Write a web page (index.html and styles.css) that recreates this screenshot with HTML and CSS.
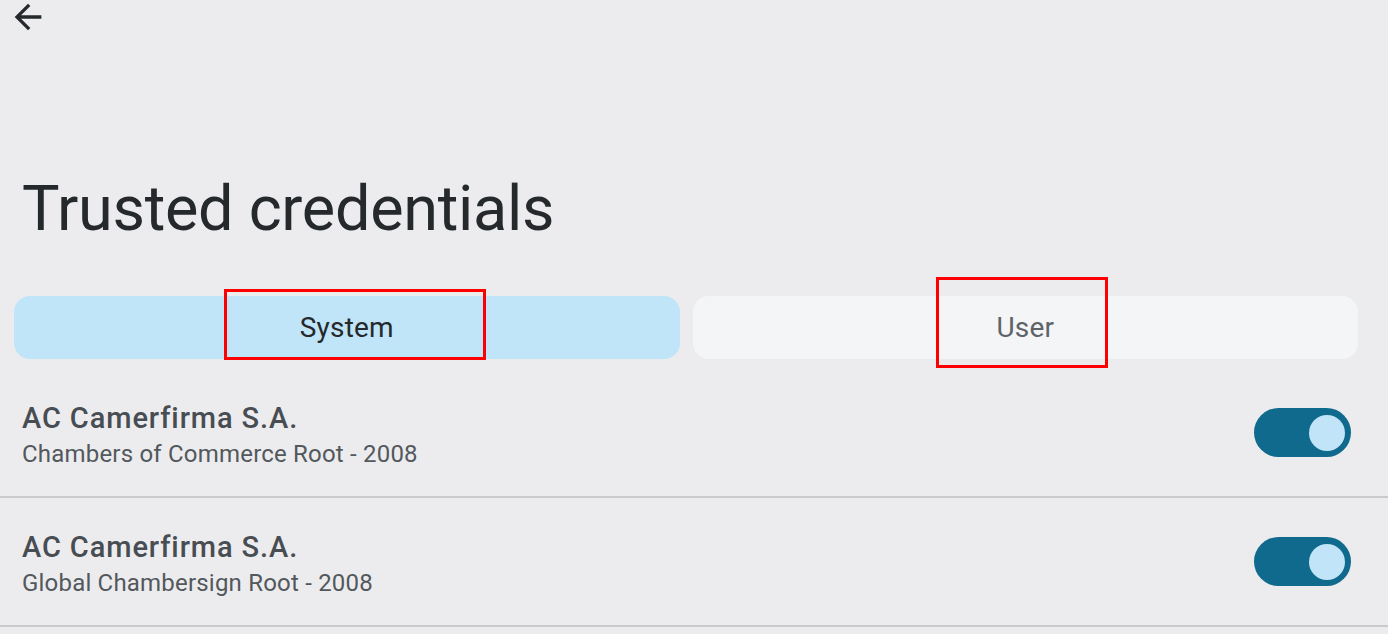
FILE: index.html
```html
<!DOCTYPE html>
<html>
<head>
<meta charset="utf-8">
<link rel="stylesheet" href="styles.css">
</head>
<body>
<div class="page">
  <div class="topbar">
    <svg class="back" viewBox="0 0 24 24" width="40" height="40"><path d="M20 11H7.83l5.59-5.59L12 4l-8 8 8 8 1.41-1.41L7.83 13H20v-2z" fill="#25292c"/></svg>
  </div>
  <h1 class="title">Trusted credentials</h1>
  <div class="tabs">
    <div class="tab active"><span class="label">System</span><span class="mark mark-system"></span></div>
    <div class="tab"><span class="label">User</span><span class="mark mark-user"></span></div>
  </div>
  <div class="list">
    <div class="row">
      <div class="text">
        <div class="name">AC Camerfirma S.A.</div>
        <div class="sub">Chambers of Commerce Root - 2008</div>
      </div>
      <div class="switch"><div class="thumb"></div></div>
    </div>
    <div class="row">
      <div class="text">
        <div class="name">AC Camerfirma S.A.</div>
        <div class="sub">Global Chambersign Root - 2008</div>
      </div>
      <div class="switch"><div class="thumb"></div></div>
    </div>
  </div>
</div>
</body>
</html>
```
FILE: styles.css
```css
html, body {
  margin: 0;
  padding: 0;
  background: #ececee;
  font-family: Roboto, "Noto Sans", sans-serif;
  overflow: hidden;
}
.page {
  width: 1388px;
  height: 634px;
}
.topbar {
  height: 40px;
  position: relative;
}
.back {
  position: absolute;
  left: 8px;
  top: -3px;
}
.title {
  margin: 131px 0 0 22px;
  font-size: 63px;
  font-weight: 400;
  letter-spacing: -0.3px;
  line-height: 76px;
  color: #25292c;
}
.tabs {
  display: flex;
  gap: 13px;
  margin: 49px 30px 0 14px;
}
.tab {
  flex: 1;
  height: 63px;
  border-radius: 16px;
  background: #f4f5f7;
  display: flex;
  align-items: center;
  justify-content: center;
  position: relative;
  font-size: 28px;
  letter-spacing: 0.2px;
  color: #5f6368;
}
.tab.active {
  background: #c0e4f8;
  color: #25292c;
}
.mark {
  position: absolute;
  border: 3px solid #ff0000;
}
.mark-system {
  left: 210px;
  top: -7px;
  width: 256px;
  height: 65px;
}
.mark-user {
  left: 243px;
  top: -19px;
  width: 166px;
  height: 85px;
}
.list {
  margin-top: 10px;
}
.row {
  height: 127px;
  border-bottom: 2px solid #c8cacc;
  display: flex;
  align-items: center;
  padding: 0 37px 0 22px;
}
.text {
  flex: 1;
  padding-top: 8px;
}
.name {
  font-size: 29px;
  font-weight: 500;
  letter-spacing: 0.9px;
  color: #474d52;
  line-height: 36px;
}
.sub {
  font-size: 24px;
  letter-spacing: 0.2px;
  color: #52585c;
  line-height: 37px;
}
.switch {
  width: 97px;
  height: 49px;
  border-radius: 25px;
  background: #0f6a8d;
  display: flex;
  align-items: center;
  justify-content: flex-end;
  padding-right: 6px;
  box-sizing: border-box;
}
.thumb {
  width: 36px;
  height: 36px;
  border-radius: 50%;
  background: #c2e4f8;
}
```
